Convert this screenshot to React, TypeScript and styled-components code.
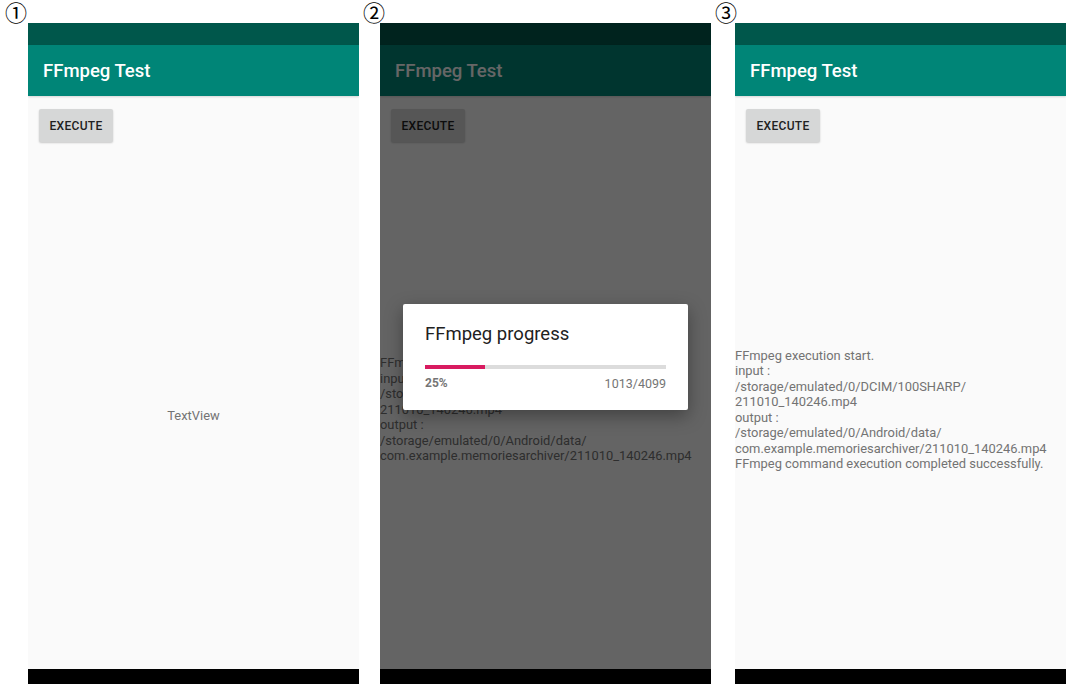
import React from "react";
import styled, { createGlobalStyle } from "styled-components";

const GlobalStyle = createGlobalStyle`
  html, body {
    margin: 0;
    padding: 0;
    background: #ffffff;
  }
  body {
    font-family: Roboto, "Liberation Sans", sans-serif;
  }
`;

const Page = styled.div`
  display: flex;
  width: 1066px;
  height: 685px;
  padding: 23px 0 0 28px;
  box-sizing: border-box;
  gap: 21px;
`;

const Column = styled.div<{ $gapAfter?: number }>`
  position: relative;
  margin-right: ${(p) => p.$gapAfter || 0}px;
`;

/* circled step number, sits in the margin above-left of each phone */
const StepLabel = styled.div<{ $left: number }>`
  position: absolute;
  top: -23px;
  left: ${(p) => p.$left}px;
  height: 23px;
  display: flex;
  align-items: center;
  font-family: "Noto Sans CJK JP", "DejaVu Sans", sans-serif;
  font-size: 22px;
  line-height: 23px;
  color: #000000;
`;

const Phone = styled.div`
  position: relative;
  width: 331px;
  height: 661px;
  display: flex;
  flex-direction: column;
  overflow: hidden;
`;

const StatusBar = styled.div`
  height: 22px;
  background: #00574b;
`;

const AppBar = styled.div`
  height: 51px;
  background: #008577;
  display: flex;
  align-items: center;
  padding: 0 15px;
  color: #ffffff;
  font-size: 18.5px;
  font-weight: 500;
  box-shadow: 0 1px 2px rgba(0, 0, 0, 0.15);
  z-index: 1;
`;

const Content = styled.div`
  flex: 1;
  background: #fafafa;
  display: flex;
  flex-direction: column;
  align-items: flex-start;
  padding: 13px 0 0 0;
`;

const ExecuteButton = styled.button`
  margin-left: 11px;
  width: 74px;
  height: 33px;
  border: none;
  border-radius: 2px;
  background: #d6d7d7;
  box-shadow: 0 1px 2px rgba(0, 0, 0, 0.2);
  font-family: Roboto, "Liberation Sans", sans-serif;
  font-size: 12px;
  font-weight: 500;
  letter-spacing: 0.3px;
  color: #212121;
  padding: 0;
`;

const MessageArea = styled.div<{ $shift: number; $align: string }>`
  flex: 1;
  align-self: stretch;
  display: flex;
  flex-direction: column;
  justify-content: center;
  align-items: ${(p) => p.$align};
  padding-top: ${(p) => p.$shift}px;
`;

const Line = styled.div`
  font-size: 12.9px;
  line-height: 15.5px;
  color: #737373;
  white-space: nowrap;
`;

const NavBar = styled.div`
  height: 15px;
  background: #000000;
`;

const Scrim = styled.div`
  position: absolute;
  inset: 0;
  background: rgba(0, 0, 0, 0.6);
  z-index: 2;
`;

const Dialog = styled.div`
  position: absolute;
  top: 281px;
  left: 23px;
  width: 285px;
  height: 106px;
  box-sizing: border-box;
  padding: 19px 22px 0 22px;
  background: #ffffff;
  border-radius: 2px;
  box-shadow: 0 6px 18px rgba(0, 0, 0, 0.35);
  z-index: 3;
`;

const DialogTitle = styled.div`
  font-size: 18.5px;
  line-height: 22px;
  color: #212121;
  font-weight: 400;
`;

const Track = styled.div`
  margin-top: 20px;
  height: 4px;
  background: #dcdcdc;
`;

const Fill = styled.div`
  height: 100%;
  background: #d81b60;
`;

const ProgressRow = styled.div`
  display: flex;
  justify-content: space-between;
  margin-top: 7px;
  font-size: 12px;
  line-height: 15px;
  color: #757575;
`;

const Percent = styled.span`
  font-weight: 700;
`;

const Count = styled.span`
  font-size: 12.5px;
`;

const logLines = [
  "FFmpeg execution start.",
  "input :",
  "/storage/emulated/0/DCIM/100SHARP/",
  "211010_140246.mp4",
  "output :",
  "/storage/emulated/0/Android/data/",
  "com.example.memoriesarchiver/211010_140246.mp4",
];

function Screen({ lines, align, shift, children }) {
  return (
    <Phone>
      <StatusBar />
      <AppBar>FFmpeg Test</AppBar>
      <Content>
        <ExecuteButton>EXECUTE</ExecuteButton>
        <MessageArea $shift={shift} $align={align}>
          {lines.map((l, i) => (
            <Line key={i}>{l}</Line>
          ))}
        </MessageArea>
      </Content>
      <NavBar />
      {children}
    </Phone>
  );
}

export default function App() {
  const done = 1013;
  const total = 4099;
  return (
    <>
      <GlobalStyle />
      <Page>
        <Column>
          <StepLabel $left={-23}>①</StepLabel>
          <Screen lines={["TextView"]} align="center" shift={21} />
        </Column>
        <Column $gapAfter={3}>
          <StepLabel $left={-17}>②</StepLabel>
          <Screen lines={logLines} align="flex-start" shift={8}>
            <Scrim />
            <Dialog>
              <DialogTitle>FFmpeg progress</DialogTitle>
              <Track>
                <Fill style={{ width: `${(done / total) * 100}%` }} />
              </Track>
              <ProgressRow>
                <Percent>25%</Percent>
                <Count>
                  {done}/{total}
                </Count>
              </ProgressRow>
            </Dialog>
          </Screen>
        </Column>
        <Column>
          <StepLabel $left={-20}>③</StepLabel>
          <Screen
            lines={[...logLines, "FFmpeg command execution completed successfully."]}
            align="flex-start"
            shift={8}
          />
        </Column>
      </Page>
    </>
  );
}
